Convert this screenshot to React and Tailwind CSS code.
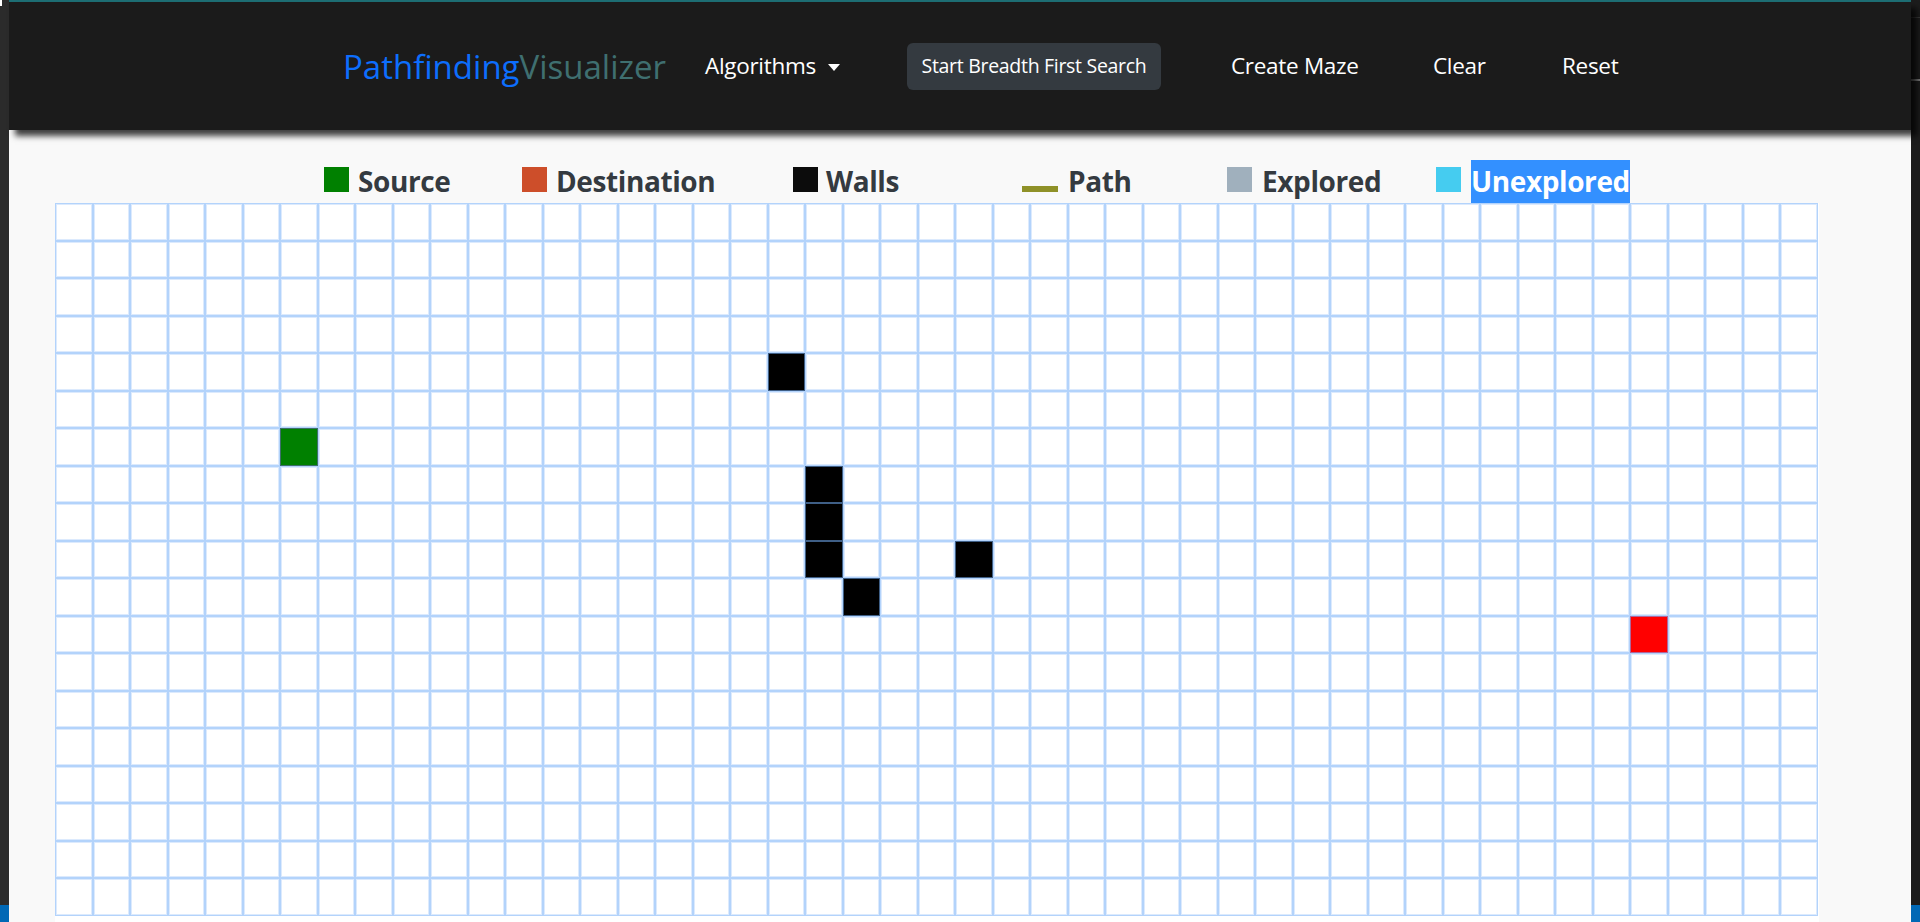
import React from "react";

const ROWS = 19;
const COLS = 47;

const WALLS = new Set(["4-19", "7-20", "8-20", "9-20", "10-21", "9-24"]);
const SOURCE = "6-6";
const TARGET = "11-42";

function cellClass(key) {
  if (key === SOURCE) return "bg-[#008000] border-[#3d6f6a]";
  if (key === TARGET) return "bg-[#ff0000] border-[#b0679a]";
  if (WALLS.has(key)) return "bg-black border-[#3f5f86]";
  return "bg-white border-[#b3d3fb] shadow-[inset_0_0_0_1px_#dceafd]";
}

function Legend() {
  const text = "text-[28px] leading-[43px] font-bold tracking-[-0.4px] text-[#343a40]";
  return (
    <div className="flex items-baseline h-[43px] mt-[30px] pl-[315px]">
      <div className="flex items-baseline w-[198px] gap-[9px]">
        <span className="w-[25px] h-[25px] bg-[#008000]" />
        <span className={text}>Source</span>
      </div>
      <div className="flex items-baseline w-[271px] gap-[9px]">
        <span className="w-[25px] h-[25px] bg-[#cd4e2a]" />
        <span className={text}>Destination</span>
      </div>
      <div className="flex items-baseline w-[229px] gap-[8px]">
        <span className="w-[25px] h-[25px] bg-[#0c0c0c]" />
        <span className={text}>Walls</span>
      </div>
      <div className="flex items-baseline w-[205px] gap-[10px]">
        <span className="w-[36px] h-[6px] bg-[#8f9128]" />
        <span className={text}>Path</span>
      </div>
      <div className="flex items-baseline w-[209px] gap-[10px]">
        <span className="w-[25px] h-[25px] bg-[#a0b0bd]" />
        <span className={text}>Explored</span>
      </div>
      <div className="flex items-baseline gap-[10px]">
        <span className="w-[25px] h-[25px] bg-[#45ccf0]" />
        <span className="text-[28px] leading-[43px] font-bold tracking-[-0.4px] text-white bg-[#3390ff]">
          Unexplored
        </span>
      </div>
    </div>
  );
}

function Grid() {
  const cells = [];
  for (let r = 0; r < ROWS; r++) {
    for (let c = 0; c < COLS; c++) {
      const key = `${r}-${c}`;
      cells.push(<div key={key} className={`border ${cellClass(key)}`} />);
    }
  }
  return (
    <div className="grid grid-cols-[repeat(47,37.5px)] grid-rows-[repeat(19,37.5px)]">
      {cells}
    </div>
  );
}

export default function App() {
  return (
    <div className="w-[1920px] h-[922px] overflow-hidden flex font-['Open_Sans',sans-serif]">
      <div className="w-[9px] flex flex-col bg-[#2b2b2b]">
        <div className="w-[2px] h-[6px] bg-white" />
        <div className="flex-1" />
        <div className="h-[17px] bg-[#0068b5]" />
      </div>

      <div className="w-[1902px] flex flex-col">
        <div className="h-[2px] bg-[#1e6f75]" />
        <nav className="relative z-10 h-[128px] bg-[#1b1b1b] flex items-center pl-[334px] shadow-[6px_6px_6px_rgba(0,0,0,0.75)]">
          <div className="w-[362px] text-[33px] leading-none">
            <span className="text-[#0d6efd]">Pathfinding</span>
            <span className="text-[#3f6f70]">Visualizer</span>
          </div>
          <div className="w-[202px] flex items-center text-[22.5px] tracking-[-0.3px] text-white">
            <span>Algorithms</span>
            <span className="ml-[12px] mt-[2px] border-t-[7px] border-t-white border-x-[6px] border-x-transparent" />
          </div>
          <button className="w-[254px] h-[47px] rounded-[6px] bg-[#343a40] text-white text-[19.5px] tracking-[-0.3px] mr-[70px]">
            Start Breadth First Search
          </button>
          <span className="w-[202px] text-[22.5px] tracking-[-0.3px] text-white">Create Maze</span>
          <span className="w-[129px] text-[22.5px] tracking-[-0.3px] text-white">Clear</span>
          <span className="text-[22.5px] tracking-[-0.3px] text-white">Reset</span>
        </nav>

        <main className="flex-1 flex flex-col bg-[#f9f9f9]">
          <Legend />
          <div className="flex-1 ml-[46px] w-[1764px] bg-white">
            <Grid />
          </div>
        </main>
      </div>

      <div className="w-[9px] flex flex-col bg-[#1c1c1c]">
        <div className="h-[17px]" />
        <div className="h-px bg-[#3a3a3a]" />
        <div className="h-[61px]" />
        <div className="h-[2px] bg-[#7a7a7a]" />
        <div className="flex-1" />
        <div className="h-[17px] bg-[#0068b5]" />
      </div>
    </div>
  );
}
